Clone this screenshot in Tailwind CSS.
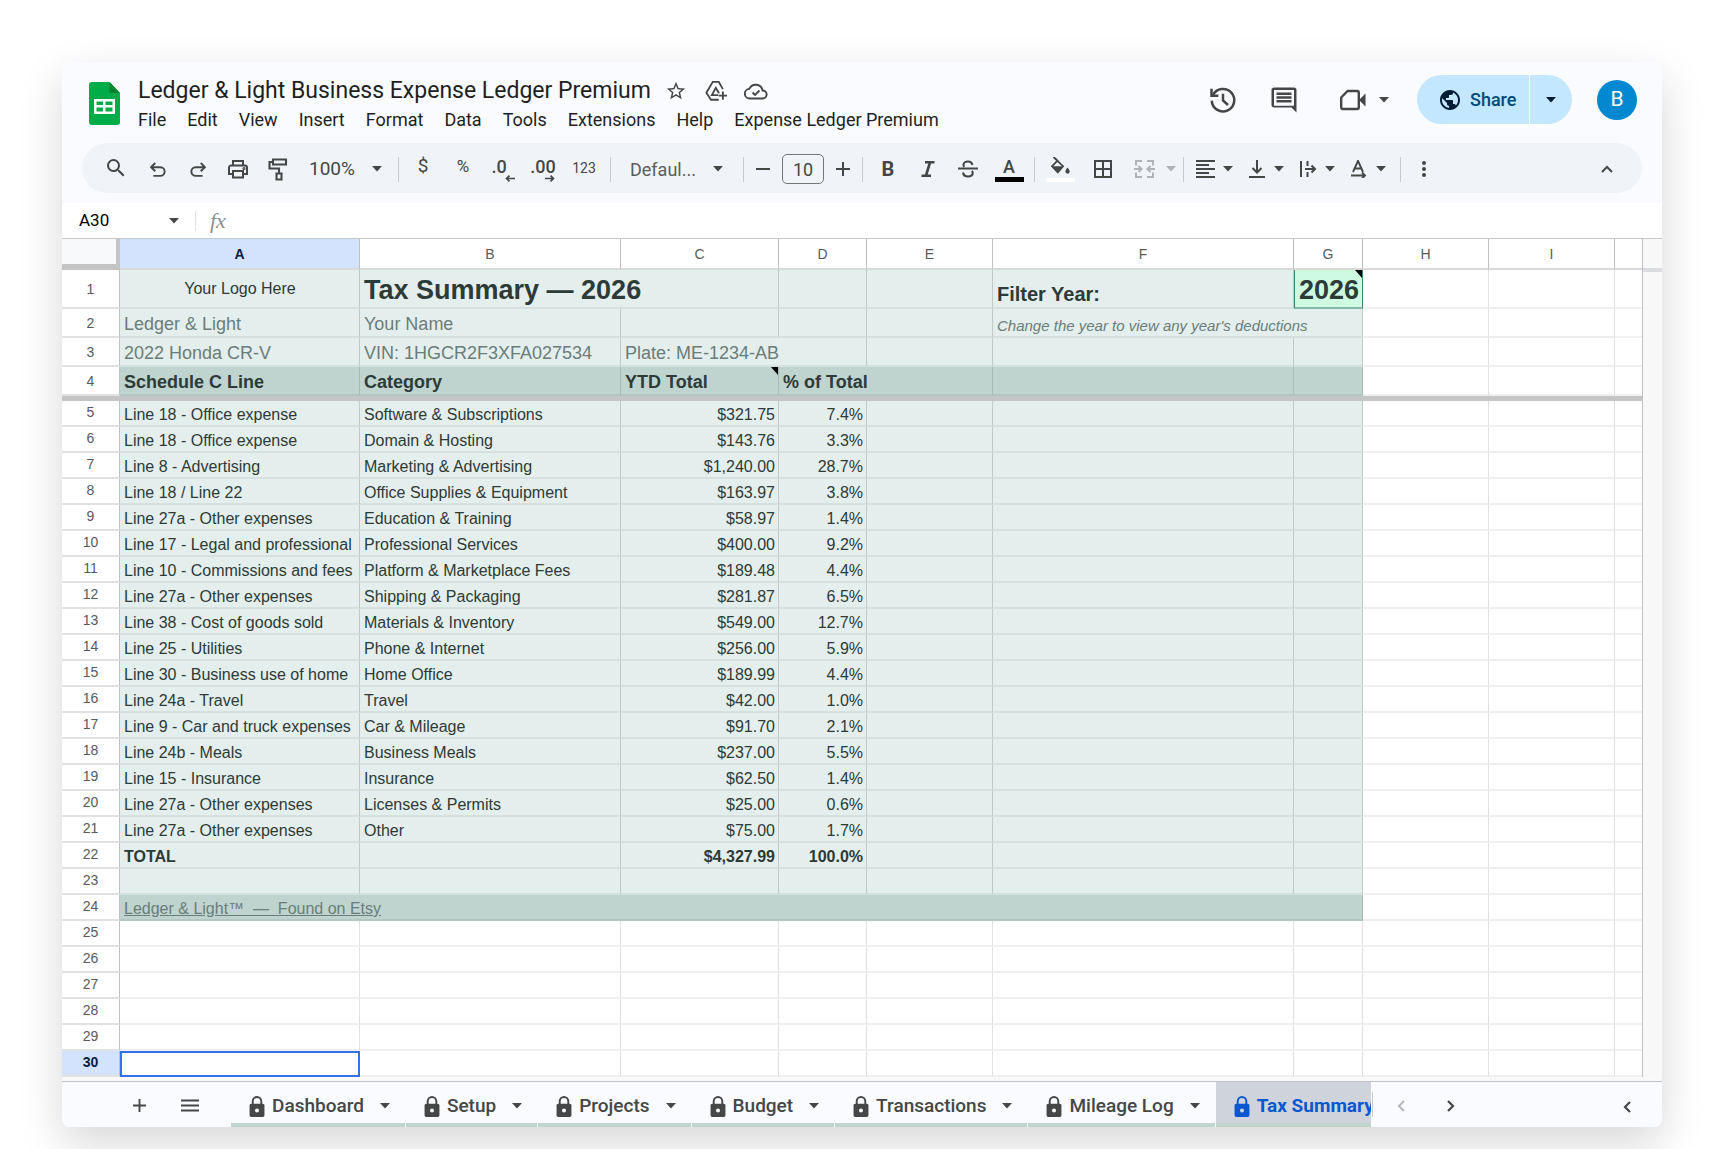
<!DOCTYPE html>
<html lang="en">
<head>
    <meta charset="UTF-8">
    <meta name="viewport" content="width=device-width, initial-scale=1.0">
    <title>Ledger &amp; Light Business Expense Ledger Premium</title>
    <script src="https://cdn.jsdelivr.net/npm/@tailwindcss/browser@4"></script>
</head>
<body class="min-h-screen bg-white px-[62px] pt-[62px] pb-[22px] font-[Roboto,sans-serif] text-[#1f1f1f]">
    <!-- Caret shared by every drop-down -->
    <svg class="hidden">
        <symbol id="caret" viewBox="0 0 10 6"><path d="M0 0h10L5 5.5z" fill="currentColor"/></symbol>
        <symbol id="lock" viewBox="0 0 16 22"><path d="M2 8h12a1.8 1.8 0 0 1 1.8 1.8v10.4A1.8 1.8 0 0 1 14 22H2a1.8 1.8 0 0 1-1.8-1.8V9.800A1.8 1.8 0 0 1 2 8zm6 5a2.100 2.100 0 1 0 0 4.200A2.100 2.100 0 0 0 8 13z" fill="currentColor" fill-rule="evenodd"/><path d="M3.500 9V5.500a4.500 4.500 0 0 1 9 0V9" fill="none" stroke="currentColor" stroke-width="2"/></symbol>
    </svg>

    <div class="overflow-hidden rounded-lg bg-white shadow-[0_16px_44px_rgba(0,0,0,0.16)]">
        <!-- Header -->
        <header class="bg-[#f9fbff] pb-2.5">
            <div class="flex h-[81px] items-start pt-[13px] pr-[25px] pl-[27px]">
                <svg class="mt-[7px] h-[43px] w-[31px] shrink-0" viewBox="0 0 31 43">
                    <path d="M3 0h17.500L31 11v29a3 3 0 0 1-3 3H3a3 3 0 0 1-3-3V3a3 3 0 0 1 3-3z" fill="#00ac47"/>
                    <path d="M20.500 0L31 11H20.500z" fill="#00832d"/>
                    <path d="M5 17h21v15H5zm2.500 2.500v3.500h6.500v-3.500zm9 0v3.500h7v-3.500zm-9 6v4h6.500v-4zm9 0v4h7v-4z" fill="#fff" fill-rule="evenodd"/>
                </svg>
                <div class="ml-[18px] min-w-0 pt-px">
                    <div class="flex h-[30px] items-center text-[#444746]">
                        <h1 class="text-[23px] leading-7 whitespace-nowrap text-[#1f1f1f]">Ledger &amp; Light Business Expense Ledger Premium</h1>
                        <button class="ml-3.5 flex w-[22px] justify-center" aria-label="Star">
                            <svg class="size-[22px]" viewBox="0 0 24 24" fill="currentColor"><path d="M22 9.240l-7.190-.620L12 2 9.190 8.630 2 9.240l5.460 4.730L5.820 21 12 17.270 18.180 21l-1.630-7.030L22 9.240zM12 15.400l-3.760 2.270 1-4.280-3.320-2.880 4.380-.380L12 6.100l1.710 4.040 4.380.380-3.320 2.880 1 4.280L12 15.400z"/></svg>
                        </button>
                        <button class="ml-[18px] flex w-[22px] justify-center" aria-label="Add to Drive">
                            <svg class="size-[22px]" viewBox="0 0 24 24" fill="none" stroke="currentColor" stroke-width="2"><path d="M15 21.500H6.500L1.500 14 8.500 2h6.500l4.500 8"/><path d="M14.500 16.500H7.500l4.300-8 3.500 6"/><path d="M19.500 12.500v9M15 17h9"/></svg>
                        </button>
                        <button class="ml-[17px] flex w-[24px] justify-center" aria-label="Saved to Drive">
                            <svg class="size-6" viewBox="0 0 24 24" fill="none" stroke="currentColor" stroke-width="1.900"><path d="M6 19.500a4.800 4.800 0 0 1-.7-9.600 7 7 0 0 1 13.300 1.600A4 4 0 0 1 18.700 19.500z"/><path d="M8.500 13.500l2.500 2.500 4.500-4.500"/></svg>
                        </button>
                    </div>
                    <nav class="flex h-[26px] items-center gap-[21px] text-[18px] whitespace-nowrap">
                        <button>File</button>
                        <button>Edit</button>
                        <button>View</button>
                        <button>Insert</button>
                        <button>Format</button>
                        <button>Data</button>
                        <button>Tools</button>
                        <button>Extensions</button>
                        <button>Help</button>
                        <button>Expense Ledger Premium</button>
                    </nav>
                </div>
                <div class="ml-auto flex h-[49px] shrink-0 items-center text-[#444746]">
                    <button aria-label="Version history">
                        <svg class="size-[30px]" viewBox="0 0 24 24" fill="none" stroke="currentColor" stroke-width="2"><path d="M2.800 3v5.500h5.500"/><path d="M4 8a9 9 0 1 1-1 4.500"/><path d="M12 7v5.300l4 3.700"/></svg>
                    </button>
                    <button class="ml-[31px]" aria-label="Comments">
                        <svg class="size-[30px]" viewBox="0 0 24 24" fill="currentColor"><path d="M21.990 4c0-1.100-.890-2-1.990-2H4c-1.100 0-2 .900-2 2v12c0 1.100.900 2 2 2h14l4 4-.010-18zM20 4v12.500H4V4h16zM6 12h12v2H6v-2zm0-3h12v2H6V9zm0-3h12v2H6V6z"/></svg>
                    </button>
                    <button class="ml-10 flex items-center gap-3" aria-label="Meet">
                        <svg class="h-[22px] w-[28px]" viewBox="0 0 28 22"><path d="M8.500 2H18a1.800 1.800 0 0 1 1.800 1.800v14.400A1.800 1.800 0 0 1 18 20H4a1.800 1.800 0 0 1-1.800-1.800V8.500z" fill="none" stroke="currentColor" stroke-width="2.400" stroke-linejoin="round"/><path d="M20 11l6.500-6.500v13z" fill="currentColor"/></svg>
                        <svg class="h-[6px] w-[10px]"><use href="#caret"/></svg>
                    </button>
                    <div class="ml-7 flex h-[49px] overflow-hidden rounded-full bg-[#c2e7ff] text-[#001d35]">
                        <button class="flex w-[113px] items-center gap-2.5 border-r border-[#f9fbff] pl-[23px] text-[18px] font-medium text-[#004a77]">
                            <svg class="size-5 text-[#001d35]" viewBox="2 2 20 20" fill="currentColor"><path d="M12 2C6.480 2 2 6.480 2 12s4.480 10 10 10 10-4.480 10-10S17.520 2 12 2zm-1 17.930c-3.950-.490-7-3.850-7-7.930 0-.620.080-1.210.210-1.790L9 15v1c0 1.100.900 2 2 2v1.930zm6.900-2.540c-.260-.810-1-1.390-1.900-1.390h-1v-3c0-.550-.450-1-1-1H8v-2h2c.550 0 1-.450 1-1V7h2c1.100 0 2-.900 2-2v-.410c2.930 1.190 5 4.060 5 7.410 0 2.080-.800 3.970-2.100 5.390z"/></svg>
                            Share
                        </button>
                        <button class="flex w-[42px] items-center justify-center" aria-label="Share options"><svg class="h-[6px] w-[10px]"><use href="#caret"/></svg></button>
                    </div>
                    <button class="ml-[25px] size-10 rounded-full bg-[#0288d1] text-[21px] text-white">B</button>
                </div>
            </div>

            <!-- Toolbar -->
            <div class="mx-5 flex h-[50px] items-center rounded-full bg-[#f0f4f9] px-3.5 pt-0.5 text-[#444746]">
                <button class="mr-0.5 flex w-10 shrink-0 justify-center pb-0.5" aria-label="Search"><svg class="size-6" viewBox="0 0 24 24" fill="currentColor"><path d="M15.500 14h-.790l-.280-.270A6.471 6.471 0 0 0 16 9.500 6.500 6.500 0 1 0 9.500 16c1.610 0 3.090-.590 4.230-1.570l.270.280v.790l5 4.990L20.490 19l-4.990-5zm-6 0C7.010 14 5 11.990 5 9.500S7.010 5 9.500 5 14 7.010 14 9.500 11.990 14 9.500 14z"/></svg></button>
                <button class="flex w-10 shrink-0 justify-center" aria-label="Undo"><svg class="size-[22px]" viewBox="0 0 24 24" fill="none" stroke="currentColor" stroke-width="2.100"><path d="M9 5.500L4.500 10 9 14.500M5 10h9.500a4.700 4.700 0 0 1 0 9.500H7"/></svg></button>
                <button class="flex w-10 shrink-0 justify-center" aria-label="Redo"><svg class="size-[22px]" viewBox="0 0 24 24" fill="none" stroke="currentColor" stroke-width="2.100"><path d="M15 5.500l4.500 4.500-4.500 4.500M19 10H9.500a4.700 4.700 0 0 0 0 9.500H17"/></svg></button>
                <button class="flex w-10 shrink-0 justify-center" aria-label="Print"><svg class="size-6" viewBox="0 0 24 24" fill="none" stroke="currentColor" stroke-width="2"><path d="M7 8.500V4h10v4.500M7 17H3v-6.500a2 2 0 0 1 2-2h14a2 2 0 0 1 2 2V17h-4"/><path d="M7 14h10v6.500H7z"/><circle cx="18" cy="11.500" r=".600"/></svg></button>
                <button class="flex w-10 shrink-0 justify-center" aria-label="Paint format"><svg class="h-6 w-[22px]" viewBox="0 0 22 24" fill="none" stroke="currentColor" stroke-width="2.100"><path d="M6 2.500h13v5H6zM6 5H2.500v6.500h9.500V16M9.500 16.500h5v6h-5z"/></svg></button>
                <div class="relative flex w-[100px] shrink-0 items-center">
                    <select aria-label="Zoom" class="w-full appearance-none pl-[11px] text-[19px]"><option>100%</option></select>
                    <svg class="pointer-events-none absolute right-4 h-[6px] w-[10px]"><use href="#caret"/></svg>
                </div>
                <span class="h-[25px] w-px shrink-0 bg-[#c7cacd]"></span>
                <button class="ml-1 w-10 shrink-0 pb-1.5 text-[19px]">$</button>
                <button class="w-10 shrink-0 pb-1 text-[17px]">%</button>
                <button class="flex w-10 shrink-0 flex-col items-center pt-0.5" aria-label="Decrease decimal places">
                    <span class="pr-2 text-[18px] leading-4 font-medium">.0</span>
                    <svg class="ml-[13px] h-[7px] w-[10px]" viewBox="0 0 10 7" fill="none" stroke="currentColor" stroke-width="1.700"><path d="M10 3.500H1.500M4.500.600l-3 2.900 3 2.900"/></svg>
                </button>
                <button class="flex w-10 shrink-0 flex-col items-center pt-0.5" aria-label="Increase decimal places">
                    <span class="text-[18px] leading-4 font-medium">.00</span>
                    <svg class="ml-[13px] h-[7px] w-[10px]" viewBox="0 0 10 7" fill="none" stroke="currentColor" stroke-width="1.700"><path d="M0 3.500h8.500M5.500.600l3 2.900-3 2.900"/></svg>
                </button>
                <button class="ml-px w-10 shrink-0 pb-0.5 text-[14px]">123</button>
                <span class="ml-1.5 h-[25px] w-px shrink-0 bg-[#c7cacd]"></span>
                <div class="relative flex w-[132px] shrink-0 items-center">
                    <select aria-label="Font" class="w-full appearance-none pl-[19px] text-[18px] text-[#5a5d5c]"><option>Defaul...</option></select>
                    <svg class="pointer-events-none absolute right-5 h-[6px] w-[10px]"><use href="#caret"/></svg>
                </div>
                <span class="h-[25px] w-px shrink-0 bg-[#c7cacd]"></span>
                <button class="flex w-[38px] shrink-0 justify-center" aria-label="Decrease font size"><svg class="size-[14px]" viewBox="0 0 14 14" stroke="currentColor" stroke-width="2"><path d="M0 7h14"/></svg></button>
                <input aria-label="Font size" value="10" class="h-[30px] w-[42px] shrink-0 rounded-[5px] border border-[#747775] text-center text-[18px]">
                <button class="flex w-[38px] shrink-0 justify-center" aria-label="Increase font size"><svg class="size-[14px]" viewBox="0 0 14 14" stroke="currentColor" stroke-width="2"><path d="M0 7h14M7 0v14"/></svg></button>
                <span class="h-[25px] w-px shrink-0 bg-[#c7cacd]"></span>
                <button class="ml-[5px] w-10 shrink-0 text-[20px] font-bold">B</button>
                <button class="flex w-10 shrink-0 justify-center" aria-label="Italic"><svg class="h-4 w-3.5" viewBox="0 0 14 16" fill="none" stroke="currentColor" stroke-width="2.600"><path d="M4 1.300h9.500M.500 14.700H10M9 1.500L5 14.500"/></svg></button>
                <button class="flex w-10 shrink-0 justify-center" aria-label="Strikethrough"><svg class="h-[18px] w-[20px]" viewBox="0 0 20 18" fill="none" stroke="currentColor" stroke-width="2.100"><path d="M0 8.500h20M14.500 5C14 2.800 12.400 1.500 10 1.500S5.500 2.800 5.500 4.800c0 .8.200 1.400.7 2M5 12.500c.4 2.600 2.300 4 5 4s4.700-1.200 4.700-3.400c0-.9-.3-1.600-.8-2.200"/></svg></button>
                <button class="mr-[5px] ml-px flex w-10 shrink-0 flex-col items-center text-[18px] leading-5 font-medium">A<span class="h-[5px] w-[29px] bg-black"></span></button>
                <span class="h-[25px] w-px shrink-0 bg-[#c7cacd]"></span>
                <button class="ml-[5px] flex w-10 shrink-0 flex-col items-center gap-1" aria-label="Fill color">
                    <svg class="h-[17px] w-[19px]" viewBox="0 0 19 17"><path d="M2.500 0L12 9.200 6.800 15.500 1 9.300 6.500 3.500z" fill="none" stroke="currentColor" stroke-width="1.800"/><path d="M1.500 9.200h10.500l-5.200 6z" fill="currentColor"/><path d="M16.500 10.500s2.200 2.500 2.200 4a2.100 2.100 0 0 1-4.300 0c0-1.500 2.100-4 2.100-4z" fill="currentColor"/></svg>
                    <span class="h-1 w-[29px] bg-white"></span>
                </button>
                <button class="ml-[3px] flex w-10 shrink-0 justify-center" aria-label="Borders"><svg class="size-[18px]" viewBox="0 0 18 18" fill="none" stroke="currentColor" stroke-width="2"><path d="M1 1h16v16H1zM9 1v16M1 9h16"/></svg></button>
                <button class="flex w-[60px] shrink-0 items-center gap-[11px] pl-[11px] text-[#b0b3b5]" aria-label="Merge cells"><svg class="h-[18px] w-[21px]" viewBox="0 0 21 18" fill="none" stroke="currentColor" stroke-width="2"><path d="M8 1H2v4.500M13 1h6v4.500M8 17H2v-4.500M13 17h6v-4.500M0 9h7M4.500 6L7.500 9l-3 3M21 9h-7M16.500 6l-3 3 3 3"/></svg><svg class="h-[6px] w-[10px]"><use href="#caret"/></svg></button>
                <span class="h-[25px] w-px shrink-0 bg-[#c7cacd]"></span>
                <button class="ml-3 flex w-[51px] shrink-0 items-center gap-2" aria-label="Horizontal align"><svg class="h-[18px] w-[19px]" viewBox="0 0 19 18" stroke="currentColor" stroke-width="1.900"><path d="M0 1h19M0 5h13M0 9h19M0 13h13M0 17h19"/></svg><svg class="h-[6px] w-[10px]"><use href="#caret"/></svg></button>
                <button class="flex w-[51px] shrink-0 items-center gap-2" aria-label="Vertical align"><svg class="h-[18px] w-[19px]" viewBox="0 0 19 18" fill="none" stroke="currentColor" stroke-width="2"><path d="M2 17h16M10 0v12M5.500 8l4.500 4.500L14.500 8"/></svg><svg class="h-[6px] w-[10px]"><use href="#caret"/></svg></button>
                <button class="flex w-[51px] shrink-0 items-center gap-2" aria-label="Text wrapping"><svg class="h-[18px] w-[19px]" viewBox="0 0 19 18" fill="none" stroke="currentColor" stroke-width="2"><path d="M3 1v16M9.500 1v5M9.500 12v5M7 9h9M13.500 5.500L17 9l-3.500 3.500"/></svg><svg class="h-[6px] w-[10px]"><use href="#caret"/></svg></button>
                <button class="flex w-[51px] shrink-0 items-center gap-2" aria-label="Text rotation"><svg class="h-[18px] w-[19px]" viewBox="0 0 19 18" fill="none" stroke="currentColor" stroke-width="1.900"><path d="M4 12L9 0.800 14 12M5.500 8.500h7M2 15.500h14M13 12.500l3 3-3 3"/></svg><svg class="h-[6px] w-[10px]"><use href="#caret"/></svg></button>
                <span class="h-[25px] w-px shrink-0 bg-[#c7cacd]"></span>
                <button class="ml-[3px] flex w-10 shrink-0 justify-center" aria-label="More"><svg class="h-[16px] w-1" viewBox="0 0 4 16" fill="currentColor"><circle cx="2" cy="2" r="2"/><circle cx="2" cy="8" r="2"/><circle cx="2" cy="14" r="2"/></svg></button>
                <button class="mr-px ml-auto flex w-10 shrink-0 justify-center" aria-label="Hide the menus"><svg class="h-2 w-3" viewBox="0 0 12 8" fill="none" stroke="currentColor" stroke-width="2"><path d="M1 7l5-5 5 5"/></svg></button>
            </div>
        </header>

        <!-- Formula bar -->
        <div class="flex h-9 items-center border-b border-[#c7c7c7]">
            <div class="relative flex w-[133px] shrink-0 items-center">
                <input aria-label="Name box" value="A30" class="w-full pl-[17px] text-[17px] text-black">
                <svg class="pointer-events-none absolute right-4 h-[6px] w-[10px] text-[#444746]"><use href="#caret"/></svg>
            </div>
            <span class="h-5 w-px bg-[#dfe3e8]"></span>
            <label for="formula" class="w-[46px] pl-3.5 font-['Liberation_Serif',serif] text-[22px] leading-5 text-[#8d8f90] italic">fx</label>
            <input id="formula" class="min-w-0 flex-1">
        </div>

        <!-- Sheet -->
        <main class="flex bg-[#f9f9f9] pb-1">
            <div class="min-w-0 flex-1 overflow-hidden">
                <table class="w-full table-fixed border-separate border-spacing-0 bg-white font-['Liberation_Sans',Arial,sans-serif] text-[16px] leading-5 text-[#2d3b38]">
                    <colgroup>
                        <col class="w-[58px]">
                        <col class="w-[240px]">
                        <col class="w-[261px]">
                        <col class="w-[158px]">
                        <col class="w-[88px]">
                        <col class="w-[126px]">
                        <col class="w-[301px]">
                        <col class="w-[69px]">
                        <col class="w-[126px]">
                        <col class="w-[126px]">
                        <col>
                    </colgroup>
                    <thead>
                        <tr id="letters" class="h-[31px] text-[14px] text-[#575a5d]">
                            <td class="border-r-4 border-b-6 border-[#c4c4c4] bg-[#f8f9fa]"></td>
                        </tr>
                    </thead>
                    <tbody id="rows"></tbody>
                </table>
            </div>
            <div class="w-[20px] shrink-0 border-l border-[#c0c0c0] bg-[#f8f8f8] pt-[29px]"><div class="h-1 bg-[#dadce0]"></div></div>
        </main>

        <!-- Sheet tabs -->
        <footer class="flex h-[46px] items-stretch border-t border-[#c0c2c5] bg-[#f9fbff] text-[#444746]">
            <button class="ml-[57px] flex w-10 shrink-0 items-center justify-center pt-0.5" aria-label="Add sheet"><svg class="size-[13px]" viewBox="0 0 14 14" stroke="currentColor" stroke-width="2"><path d="M0 7h14M7 0v14"/></svg></button>
            <button class="ml-[11px] flex w-10 shrink-0 items-center justify-center pt-0.5" aria-label="All sheets"><svg class="h-[13px] w-[18px]" viewBox="0 0 18 13" stroke="currentColor" stroke-width="2"><path d="M0 1.500h18M0 6.500h18M0 11.500h18"/></svg></button>
            <div id="tabs" class="mr-px ml-[21px] flex w-[1140px] shrink-0 gap-px overflow-hidden text-[19px] font-medium"></div>
            <span class="mt-2.5 h-[25px] w-px shrink-0 bg-[#c7cacd]"></span>
            <button class="ml-2 flex w-10 shrink-0 items-center justify-center pt-0.5 text-[#b5b8ba]" aria-label="Scroll left"><svg class="h-3 w-2" viewBox="0 0 8 12" fill="none" stroke="currentColor" stroke-width="2"><path d="M7 1L2 6l5 5"/></svg></button>
            <button class="ml-[10px] flex w-10 shrink-0 items-center justify-center pt-0.5" aria-label="Scroll right"><svg class="h-3 w-2" viewBox="0 0 8 12" fill="none" stroke="currentColor" stroke-width="2.200"><path d="M1 1l5 5-5 5"/></svg></button>
            <button class="mr-[15px] ml-auto flex w-10 shrink-0 items-center justify-center pt-1" aria-label="Side panel"><svg class="h-3 w-2" viewBox="0 0 8 12" fill="none" stroke="currentColor" stroke-width="2.200"><path d="M7 1L2 6l5 5"/></svg></button>
        </footer>
    </div>

    <script>
        const expenses = [
            ['Line 18 - Office expense', 'Software & Subscriptions', '$321.75', '7.4%'],
            ['Line 18 - Office expense', 'Domain & Hosting', '$143.76', '3.3%'],
            ['Line 8 - Advertising', 'Marketing & Advertising', '$1,240.00', '28.7%'],
            ['Line 18 / Line 22', 'Office Supplies & Equipment', '$163.97', '3.8%'],
            ['Line 27a - Other expenses', 'Education & Training', '$58.97', '1.4%'],
            ['Line 17 - Legal and professional', 'Professional Services', '$400.00', '9.2%'],
            ['Line 10 - Commissions and fees', 'Platform & Marketplace Fees', '$189.48', '4.4%'],
            ['Line 27a - Other expenses', 'Shipping & Packaging', '$281.87', '6.5%'],
            ['Line 38 - Cost of goods sold', 'Materials & Inventory', '$549.00', '12.7%'],
            ['Line 25 - Utilities', 'Phone & Internet', '$256.00', '5.9%'],
            ['Line 30 - Business use of home', 'Home Office', '$189.99', '4.4%'],
            ['Line 24a - Travel', 'Travel', '$42.00', '1.0%'],
            ['Line 9 - Car and truck expenses', 'Car & Mileage', '$91.70', '2.1%'],
            ['Line 24b - Meals', 'Business Meals', '$237.00', '5.5%'],
            ['Line 15 - Insurance', 'Insurance', '$62.50', '1.4%'],
            ['Line 27a - Other expenses', 'Licenses & Permits', '$25.00', '0.6%'],
            ['Line 27a - Other expenses', 'Other', '$75.00', '1.7%']
        ];

        // Cell styles
        const base = 'overflow-hidden whitespace-nowrap align-bottom border-r border-b-2 pr-[3px] pl-1 py-0 ';
        const plain = base + 'border-r-black/12 border-b-black/6 ';
        const tint = base + 'border-r-black/15 border-b-black/6 bg-[#e4eeec] ';
        const band = base + 'border-r-black/12 border-b-black/6 bg-[#bfd4cf] ';
        const note = '<span class="absolute top-0 right-0 h-2 w-[7px] bg-black [clip-path:polygon(0_0,100%_0,100%_100%)]"></span>';

        const td = (text, cls, span = 1) => `<td colspan="${span}" class="${cls}">${text}</td>`;
        const blanks = (n, cls) => td('', cls).repeat(n);

        function row(n, height, cells) {
            const active = n === 30 ? 'bg-[#d3e3fd] font-bold text-[#041e49]' : 'bg-white font-normal text-[#575a5d]';
            const pad = n > 4 ? 'pb-0.5' : '';
            return `<tr class="${height}"><th scope="row" class="border-r border-b-2 border-r-[#c0c0c0] border-b-[#e1e1e1] p-0 text-[14px] leading-4 ${pad} ${active}">${n}</th>${cells}</tr>`;
        }

        document.getElementById('letters').innerHTML += ['A', 'B', 'C', 'D', 'E', 'F', 'G', 'H', 'I', ''].map(l => {
            const active = l === 'A' ? 'bg-[#d3e3fd] font-bold text-[#041e49]' : 'font-normal';
            return `<th scope="col" class="border-r border-b-2 border-r-[#c0c0c0] border-b-[#d8dada] p-0 last:border-r-0 ${active}">${l}</th>`;
        }).join('');

        const rest = blanks(2, plain) + td('', plain + 'border-r-0');
        const muted = tint + 'text-[18px] pb-0.5 text-[#6a7d79]';
        const head = band + 'relative text-[18px] pb-0.5 font-bold';

        let html = row(1, 'h-[39px]',
            td('Your Logo Here', tint + 'text-center align-middle') +
            td('Tax Summary — 2026', tint + 'pb-px text-[27px] leading-8 font-bold', 2) + blanks(2, tint) +
            td('Filter Year:', tint + 'pb-px text-[20px] leading-6 font-bold') +
            td('2026' + note, base + 'relative border-l border-x-[#38877b] border-b-[#84b9ad] bg-[#cffae2] pb-px text-right text-[27px] leading-8 font-bold') + rest);
        html += row(2, 'h-[29px]',
            td('Ledger &amp; Light', muted) + td('Your Name', muted) + blanks(3, tint) +
            td("Change the year to view any year's deductions", tint + 'pb-px text-[15px] leading-[18px] text-[#6a7d79] italic', 2) + rest);
        html += row(3, 'h-[29px]',
            td('2022 Honda CR-V', muted) + td('VIN: 1HGCR2F3XFA027534', muted) + td('Plate: ME-1234-AB', muted, 2) + blanks(3, tint) + rest);
        html += row(4, 'h-[29px]',
            td('Schedule C Line', head) + td('Category', head) + td('YTD Total' + note, head) + td('% of Total', head, 2) + blanks(2, band) + rest);
        html += '<tr class="h-[5px]"><td colspan="11" class="bg-[#c5c5c5] p-0"></td></tr>';

        expenses.forEach(([line, category, total, share], i) => {
            html += row(i + 5, 'h-[26px]',
                td(line, tint) + td(category.replace('&', '&amp;'), tint) + td(total, tint + 'text-right') + td(share, tint + 'text-right') + blanks(3, tint) + rest);
        });

        html += row(22, 'h-[26px]',
            td('TOTAL', tint + 'font-bold') + blanks(1, tint) + td('$4,327.99', tint + 'text-right font-bold') + td('100.0%', tint + 'text-right font-bold') + blanks(3, tint) + rest);
        html += row(23, 'h-[26px]', blanks(7, tint) + rest);
        html += row(24, 'h-[26px]', td('<a href="#" class="underline">Ledger &amp; Light™ &nbsp;—&nbsp; Found on Etsy</a>', band + 'text-[#6a7d79]', 7) + rest);
        for (let n = 25; n < 30; n++) html += row(n, 'h-[26px]', blanks(7, plain) + rest);
        html += row(30, 'h-[26px]', td('', plain + 'outline-2 -outline-offset-2 outline-[#3271ea]') + blanks(6, plain) + rest);
        document.getElementById('rows').innerHTML = html;

        document.getElementById('tabs').innerHTML = ['Dashboard', 'Setup', 'Projects', 'Budget', 'Transactions', 'Mileage Log', 'Tax Summary'].map(name => {
            const active = name === 'Tax Summary' ? 'bg-[#ced3dc] font-bold text-[#0b57d0]' : '';
            return `<button class="flex shrink-0 items-center border-b-4 border-[#bfd4cf] pt-[7px] pr-[15px] pl-[18px] whitespace-nowrap ${active}">
                <svg class="mr-[7px] h-[21px] w-4"><use href="#lock"/></svg>${name}<svg class="ml-4 h-[6px] w-[10px]"><use href="#caret"/></svg>
            </button>`;
        }).join('');
    </script>
</body>
</html>
